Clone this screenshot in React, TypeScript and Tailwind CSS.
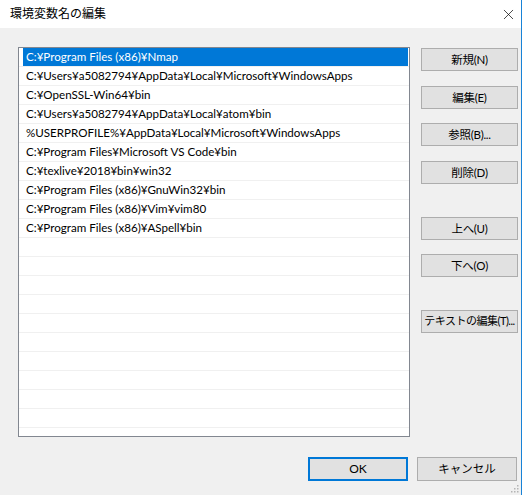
import { X } from "lucide-react";

const paths = [
  "C:¥Program Files (x86)¥Nmap",
  "C:¥Users¥a5082794¥AppData¥Local¥Microsoft¥WindowsApps",
  "C:¥OpenSSL-Win64¥bin",
  "C:¥Users¥a5082794¥AppData¥Local¥atom¥bin",
  "%USERPROFILE%¥AppData¥Local¥Microsoft¥WindowsApps",
  "C:¥Program Files¥Microsoft VS Code¥bin",
  "C:¥texlive¥2018¥bin¥win32",
  "C:¥Program Files (x86)¥GnuWin32¥bin",
  "C:¥Program Files (x86)¥Vim¥vim80",
  "C:¥Program Files (x86)¥ASpell¥bin",
];

// empty rows that fill the rest of the list view
const blanks = Array.from({ length: 11 }, (_, i) => i);

const Button = ({ label, className = "" }: { label: string; className?: string }) => (
  <button
    className={`flex h-[23px] items-center justify-center whitespace-nowrap border border-[#adadad] bg-[#e1e1e1] px-0 text-[11.5px] tracking-[-0.3px] text-black ${className}`}
  >
    {label}
  </button>
);

// dotted resize grip in the lower right corner
const SizeGrip = () => (
  <svg width="10" height="10" viewBox="0 0 10 10" className="absolute bottom-[2px] right-[2px]">
    {[
      [8, 2],
      [5, 5],
      [8, 5],
      [2, 8],
      [5, 8],
      [8, 8],
    ].map(([x, y]) => (
      <rect key={`${x}-${y}`} x={x} y={y} width="1.5" height="1.5" fill="#b4b4b4" />
    ))}
  </svg>
);

export default function App() {
  return (
    <div className="h-[495px] w-[526px] bg-white">
      <div
        className="relative flex h-[495px] w-[522px] flex-col overflow-hidden border-r border-[#1883d7] bg-[#f0f0f0] text-black"
        style={{ fontFamily: 'Lato, "Noto Sans CJK JP", sans-serif' }}
      >
        <div className="flex h-[28px] items-center justify-between bg-white pl-[10px] pr-[4px]">
          <span className="text-[12px]">環境変数名の編集</span>
          <X size={17} strokeWidth={1} className="text-black" />
        </div>

        <div className="flex pl-[18px] pt-[19px]">
          <div className="h-[390px] w-[392px] overflow-hidden border border-[#828790] bg-white">
            {paths.map((p, i) => (
              <div key={p} className="flex h-[19px] border-b border-[#f0f0f0] pl-[4px] pr-[1px]">
                <div
                  className={`flex h-full w-full items-center whitespace-nowrap pl-[3px] text-[11.6px] leading-none ${
                    i === 0 ? "bg-[#0078d7] text-white" : ""
                  }`}
                >
                  {p}
                </div>
              </div>
            ))}
            {blanks.map((b) => (
              <div key={b} className="h-[19px] border-b border-[#f0f0f0]" />
            ))}
          </div>

          <div className="ml-[11px] flex w-[97px] flex-col pt-[1px]">
            <Button label="新規(N)" />
            <Button label="編集(E)" className="mt-[15px]" />
            <Button label="参照(B)..." className="mt-[14px]" />
            <Button label="削除(D)" className="mt-[15px]" />
            <Button label="上へ(U)" className="mt-[33px]" />
            <Button label="下へ(O)" className="mt-[14px]" />
            <Button label="テキストの編集(T)..." className="mt-[33px] text-[11px] tracking-[-0.5px]" />
          </div>
        </div>

        <div className="mt-[20px] flex justify-end gap-[9px] pr-[4px]">
          <button className="flex h-[24px] w-[100px] items-center justify-center border-2 border-[#0078d7] bg-[#e1e1e1] text-[12px]">
            OK
          </button>
          <button className="flex h-[24px] w-[100px] items-center justify-center border border-[#adadad] bg-[#e1e1e1] text-[11.5px]">
            キャンセル
          </button>
        </div>

        <SizeGrip />
      </div>
    </div>
  );
}
